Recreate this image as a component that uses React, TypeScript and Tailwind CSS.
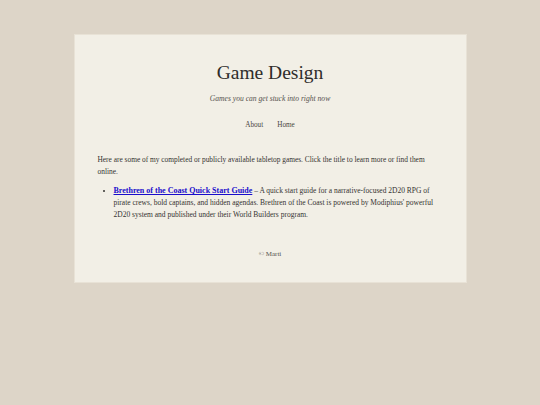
export default function App() {
  return (
    <div className="min-h-screen bg-[#ddd5c8] pt-[34px] pb-10" style={{ fontFamily: '"Liberation Serif", serif' }}>
      <div className="mx-auto w-[393px] border border-[#e8e2d6] bg-[#f2efe6] px-[23px] pt-[26px] pb-[22px] text-[#353331]">
        <header className="text-center">
          <h1 className="text-[19.5px] leading-6 text-[#2f2d2b]">Game Design</h1>
          <p className="mt-[8px] text-[7.6px] italic leading-3 text-[#55524e]">Games you can get stuck into right now</p>
          <nav className="mt-[14px] flex justify-center gap-[14px] text-[7.2px] leading-3 text-[#4a4744]">
            <a>About</a>
            <a>Home</a>
          </nav>
        </header>
        <main className="mt-[23px] text-[7.5px] leading-3">
          <p className="text-[7.4px]">
            Here are some of my completed or publicly available tabletop games. Click the title to learn more or find them online.
          </p>
          <ul className="mt-[7px] list-disc pl-[16px]">
            <li>
              <a className="text-[8px] font-bold text-[#1a0dcc] underline">Brethren of the Coast Quick Start Guide</a> – A quick start guide for a narrative-focused 2D20 RPG of pirate crews, bold captains, and hidden agendas. Brethren of the Coast is powered by Modiphius' powerful 2D20 system and published under their World Builders program.
            </li>
          </ul>
        </main>
        <footer className="mt-[27px] text-center text-[7px] leading-3 text-[#55524e]">© Marti</footer>
      </div>
    </div>
  )
}
